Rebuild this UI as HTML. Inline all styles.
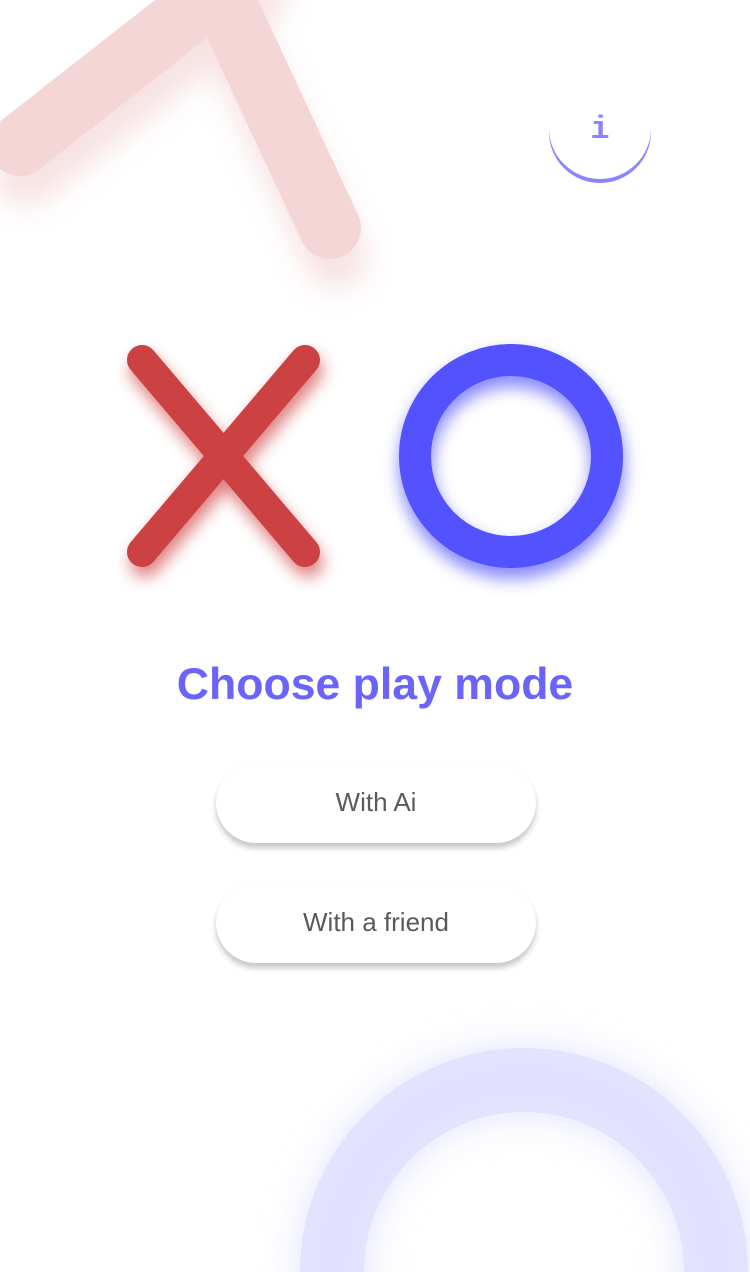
<!DOCTYPE html>
<html><head><meta charset="utf-8"><style>
html,body{margin:0;padding:0;background:#fff;width:750px;height:1272px;overflow:hidden;position:relative;font-family:"Liberation Sans",sans-serif}
svg{position:absolute;left:0;top:0;overflow:hidden}
.title{position:absolute;left:0;width:750px;top:656px;text-align:center;font-weight:bold;font-size:44.6px;color:#6a64fb;line-height:58px}
.btn{position:absolute;left:216px;width:320px;height:80px;border-radius:40px;background:#fff;box-shadow:0 5px 6px rgba(0,0,0,0.22),0 0 2px rgba(0,0,0,0.04);text-align:center;line-height:78px;font-size:26px;color:#5a5a5a}
.info{position:absolute;left:549px;top:77px;width:102px;height:102px;border-radius:50%;background:#fff;box-shadow:0 4px 0 #8a84ff;text-align:center;line-height:106px;font-family:"Liberation Mono",monospace;font-weight:bold;font-size:32px;color:#8a84ff}
</style></head><body>
<svg width="750" height="1272">
<defs>
<filter id="b1" x="-50%" y="-50%" width="200%" height="200%"><feGaussianBlur stdDeviation="14"/></filter>
<filter id="b2" x="-50%" y="-50%" width="200%" height="200%"><feGaussianBlur stdDeviation="8"/></filter>
<filter id="b3" x="-50%" y="-50%" width="200%" height="200%"><feGaussianBlur stdDeviation="20"/></filter>
</defs>
<g stroke="#f4d6d7" stroke-width="62" stroke-linecap="round" fill="none">
<g filter="url(#b1)" opacity="0.7" transform="translate(6,30)"><line x1="20" y1="145" x2="250" y2="-35"/><line x1="330" y1="228" x2="205" y2="-40"/></g>
<line x1="20" y1="145" x2="250" y2="-35"/>
<line x1="330" y1="228" x2="205" y2="-40"/>
</g>
<g stroke-width="30" stroke-linecap="round" fill="none">
<g stroke="#d24a4a" filter="url(#b2)" opacity="0.7" transform="translate(3,10)"><line x1="142" y1="360" x2="305" y2="552"/><line x1="305" y1="360" x2="142" y2="552"/></g>
<g stroke="#cc4242"><line x1="142" y1="360" x2="305" y2="552"/><line x1="305" y1="360" x2="142" y2="552"/></g>
</g>
<circle cx="512" cy="466" r="96" stroke="#5a5aff" stroke-width="34" fill="none" filter="url(#b2)" opacity="0.7"/>
<circle cx="511" cy="456" r="96" stroke="#5252ff" stroke-width="32" fill="none"/>
<circle cx="524" cy="1272" r="192" stroke="#e2e2ff" stroke-width="64" fill="none" filter="url(#b3)"/>
<circle cx="524" cy="1272" r="192" stroke="#e0e0ff" stroke-width="64" fill="none" opacity="0.8"/>
</svg>
<div class="info">i</div>
<div class="title">Choose play mode</div>
<div class="btn" style="top:763px">With Ai</div>
<div class="btn" style="top:883px">With a friend</div>
</body></html>
